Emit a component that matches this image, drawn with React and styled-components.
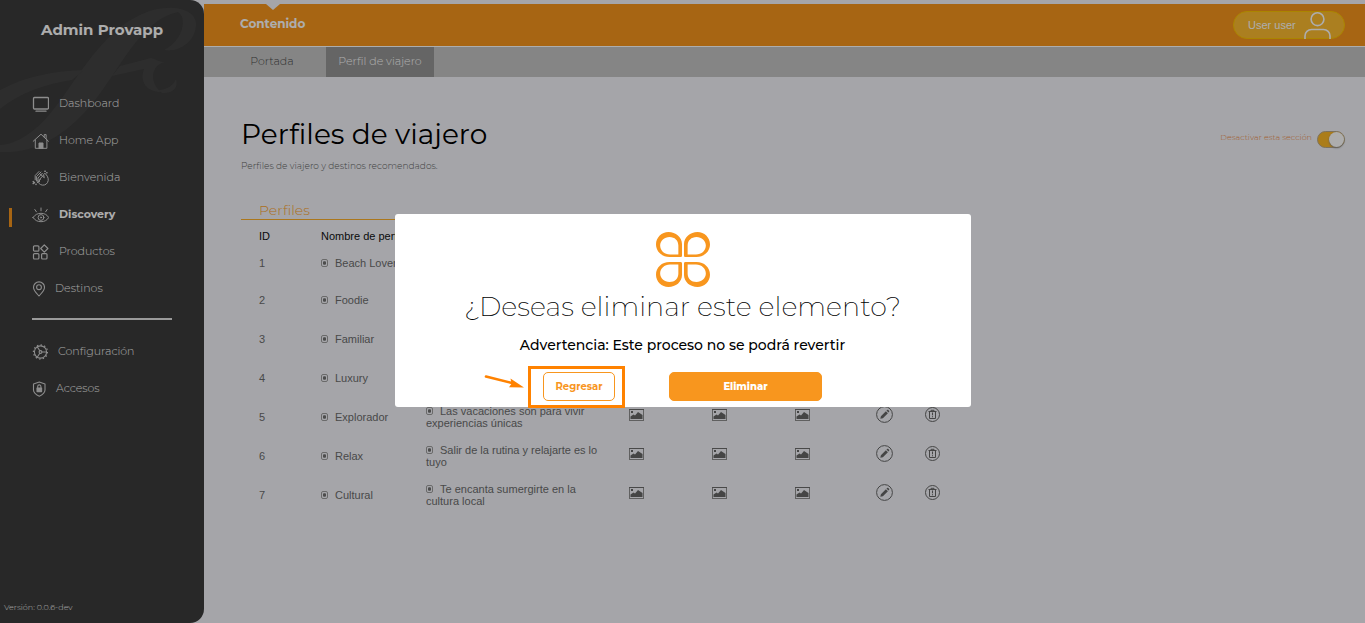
import React, { useState } from 'react';
import styled, { createGlobalStyle } from 'styled-components';

const GlobalStyle = createGlobalStyle`
  * {
    box-sizing: border-box;
  }

  body {
    margin: 0;
    background-color: #f3f4fa;
    font-family: Montserrat, Inter, sans-serif;
  }

  button, input {
    font-family: inherit;
  }
`

const Layout = styled.div`
  display: flex;
  min-height: 100vh;
`

/* sidebar */

const Sidebar = styled.aside`
  position: relative;
  display: flex;
  flex-direction: column;
  flex: 0 0 204px;
  background-color: #3b3b3b;
  border-radius: 0 14px 14px 0;
  overflow: hidden;
`

const Watermark = styled.svg`
  position: absolute;
  top: 0;
  left: 0;
  width: 204px;
  height: 160px;
  fill: #434343;
`

const Brand = styled.h1`
  position: relative;
  margin: 20px 0 44px;
  font-size: 15px;
  line-height: 20px;
  font-weight: 700;
  text-align: center;
  color: #ffffff;
`

const Menu = styled.nav`
  position: relative;
  display: flex;
  flex-direction: column;
`

const MenuLink = styled.a`
  position: relative;
  display: flex;
  align-items: center;
  gap: 10px;
  height: 37px;
  padding-left: 32px;
  font-size: 11px;
  font-weight: ${props => props.$active ? 700 : 300};
  color: ${props => props.$active ? '#ffffff' : '#f4f4f4'};
  text-decoration: none;

  svg {
    margin-top: 2px;
    color: #d0d0d0;
  }

  &::before {
    content: '';
    display: ${props => props.$active ? 'block' : 'none'};
    position: absolute;
    left: 9px;
    top: 13px;
    width: 3px;
    height: 19px;
    background-color: #f7961d;
  }
`

const Divider = styled.hr`
  width: 140px;
  height: 2px;
  margin: 12px 32px;
  border: 0;
  background-color: #e4e4e4;
`

const Version = styled.small`
  margin-top: auto;
  padding: 0 4px 11px;
  font-size: 8px;
  line-height: 10px;
  font-weight: 300;
  color: #f4f4f4;
`

/* header */

const Main = styled.main`
  flex: 1;
  min-width: 0;
  padding-top: 4px;
`

const TopBar = styled.header`
  display: flex;
  align-items: flex-start;
  justify-content: space-between;
  height: 43px;
  padding: 0 20px 0 36px;
  background-color: #f7961d;
  border-bottom: 1px solid #ffffff;
`

const TopLink = styled.a`
  position: relative;
  font-size: 12px;
  line-height: 40px;
  font-weight: 700;
  color: #ffffff;
  text-decoration: none;

  &::before {
    content: '';
    position: absolute;
    top: 0;
    left: 50%;
    margin-left: -7px;
    border: 7px solid transparent;
    border-top: 6px solid #f3f4fa;
    border-bottom: 0;
  }
`

const UserButton = styled.button`
  display: flex;
  align-items: center;
  justify-content: space-between;
  width: 112px;
  height: 28px;
  margin-top: 7px;
  padding: 0 13px 0 14px;
  border: 1px solid #fdc400;
  border-radius: 14px;
  background-color: #fdbb30;
  font-family: "Liberation Sans", sans-serif;
  font-size: 11px;
  color: #ffffff;
`

const Tabs = styled.nav`
  display: flex;
  height: 30px;
  padding-left: 14px;
  background-color: #c5c5c5;
`

const Tab = styled.a`
  width: 108px;
  font-size: 11px;
  line-height: 28px;
  font-weight: 300;
  text-align: center;
  text-decoration: none;
  color: ${props => props.$active ? '#ffffff' : '#4a4a4a'};
  background-color: ${props => props.$active ? '#969696' : 'transparent'};
`

/* content */

const Content = styled.div`
  padding: 38px 20px 0 37px;
`

const Heading = styled.div`
  display: flex;
  justify-content: space-between;
  align-items: flex-start;
`

const Title = styled.h2`
  margin: 0;
  font-size: 28px;
  line-height: 38px;
  font-weight: 400;
  color: #000000;
`

const Subtitle = styled.p`
  margin: 7px 0 0;
  font-size: 9px;
  line-height: 12px;
  font-weight: 300;
  color: #606060;
`

const SwitchLabel = styled.label`
  display: flex;
  align-items: flex-start;
  gap: 5px;
  margin-top: 16px;
  font-size: 8px;
  line-height: 12px;
  font-weight: 300;
  color: #ef8a45;
`

const Switch = styled.input`
  appearance: none;
  display: flex;
  justify-content: flex-start;
  width: 28px;
  height: 17px;
  margin: 0;
  border: 1px solid #b9a98a;
  border-radius: 9px;
  background-color: #d5d5d5;
  cursor: pointer;

  &:checked {
    justify-content: flex-end;
    background-color: #fdb827;
  }

  &::after {
    content: '';
    width: 15px;
    height: 15px;
    border-radius: 50%;
    background-color: #ffffff;
    box-shadow: 0 1px 2px #8a8a8a;
  }
`

const Section = styled.section`
  width: 66%;
  margin-top: 30px;
`

const SectionTitle = styled.h3`
  margin: 0 0 7px;
  padding: 0 0 1px 18px;
  border-bottom: 1px solid #fdb02a;
  font-size: 14px;
  line-height: 16px;
  font-weight: 300;
  color: #fda52e;
`

const Table = styled.table`
  width: 100%;
  table-layout: fixed;
  border-collapse: collapse;
  font-family: "Liberation Sans", sans-serif;
  font-size: 11px;
  line-height: 12px;
  color: #6c6c6c;
`

const HeadCell = styled.th`
  height: 18px;
  padding: 0;
  font-weight: 400;
  text-align: left;
  white-space: nowrap;
  color: #101010;

  &:first-child {
    padding-left: 18px;
  }
`

const Row = styled.tr`
  height: 39px;

  &:first-child {
    height: 35px;
  }
`

const Cell = styled.td`
  padding: 0 20px 0 0;

  &:first-child {
    padding-left: 18px;
  }
`

const NameCell = styled(Cell)`
  padding: 0;
  white-space: nowrap;
`

const IconCell = styled.td`
  padding: 0 0 4px;

  svg {
    display: block;
  }
`

const IconButton = styled.button`
  display: block;
  padding: 0;
  border: 0;
  background: none;
  color: inherit;
  cursor: pointer;
`

const InlineIcon = styled.svg`
  margin-right: 7px;
`

/* modal */

const Backdrop = styled.div`
  position: fixed;
  inset: 0;
  display: flex;
  align-items: center;
  justify-content: center;
  padding-bottom: 2px;
  background-color: rgba(0, 0, 0, 0.32);
`

const Modal = styled.div`
  display: flex;
  flex-direction: column;
  align-items: center;
  width: 576px;
  max-width: 100%;
  padding: 18px 20px 6px;
  border-radius: 3px;
  background-color: #ffffff;
`

const ModalTitle = styled.h2`
  margin: 0;
  font-size: 27px;
  line-height: 40px;
  font-weight: 200;
  color: #000000;
`

const Warning = styled.p`
  margin: 8px 0 17px;
  font-size: 14px;
  line-height: 20px;
  font-weight: 500;
  color: #000000;
`

const Actions = styled.div`
  display: flex;
  gap: 54px;
`

const Highlight = styled.div`
  position: relative;

  &::after {
    content: '';
    position: absolute;
    inset: -6px -10px -7px -15px;
    border: 3px solid #ff8200;
    pointer-events: none;
  }
`

const Arrow = styled.svg`
  position: absolute;
  top: 0;
  left: -59px;
`

const ModalButton = styled.button`
  width: ${props => props.$primary ? '153px' : '72px'};
  height: 29px;
  padding: 0;
  border: 1px solid #f8961e;
  border-radius: 5px;
  background-color: ${props => props.$primary ? '#f8961e' : '#ffffff'};
  color: ${props => props.$primary ? '#ffffff' : '#f8961e'};
  font-size: 10px;
  font-weight: ${props => props.$primary ? 800 : 700};
  cursor: pointer;
`

const line = { fill: 'none', stroke: 'currentColor', strokeLinecap: 'round', strokeLinejoin: 'round' };

const DashboardIcon = () => (
  <svg width="17" height="16" viewBox="0 0 17 16" {...line} strokeWidth="1.3">
    <rect x="1.5" y="1.5" width="15" height="11.5" rx="1" />
    <path d="M4 15.2h10" />
  </svg>
)

const HomeIcon = () => (
  <svg width="17" height="16" viewBox="0 0 17 16" {...line} strokeWidth="1">
    <path d="M1.2 8.3L9 1.2l7.4 7.1M12.2 4V1.6h1.9v4M3.3 7v8.3h11.6V7" />
    <path d="M7 15.3V10h4v5.3z" fill="currentColor" />
  </svg>
)

const ClapIcon = () => (
  <svg width="17" height="16" viewBox="0 0 17 16" {...line} strokeWidth="1">
    <path d="M13.2 3.6c2 1.800 3.400 4.400 3 7-.5 3-3 4.900-5.900 4.500-2.400-.3-4.200-2-4.600-4.300M13.200 3.600c-.9-.4-1.700.3-1.500 1.300l.6 2.900L8 4" />
    <path d="M3.200 9.800V5.500L7 1.500M4.600 11V6.500L9 2M6 11.200V8l4.300-4.700M7.400 11.800V9.500l3.800-4M5.300 12.800l3.200-3.600" />
    <path d="M12.800 1.300h.5M14.700 2.800h.3M1.200 11.500l1.300 1.200-1.300.8M4 14.300v.3" strokeWidth="1.500" />
  </svg>
)

const EyeIcon = () => (
  <svg width="17" height="16" viewBox="0 0 17 16" {...line} strokeWidth="1">
    <path d="M1 10.500C3 7.700 5.500 6.300 9 6.300s6 1.400 7.700 4.200C15 13.300 12.500 14.700 9 14.700S3 13.300 1 10.500z" />
    <circle cx="9" cy="10.500" r="2.900" />
    <circle cx="9" cy="10.500" r=".6" />
    <path d="M9 1v2.800M2.800 2.500l1.600 2.300M15.200 2.500l-1.600 2.300" />
  </svg>
)

const ProductsIcon = () => (
  <svg width="17" height="16" viewBox="0 0 17 16" {...line} strokeWidth="1.200">
    <rect x="1.500" y="1.800" width="5.400" height="5.400" rx="1" />
    <rect x="1.500" y="9.600" width="5.400" height="5.400" rx="1" />
    <rect x="9.600" y="9.600" width="5.400" height="5.400" rx="1" />
    <path d="M12.300.9l3.600 3.600-3.600 3.600-3.600-3.600z" />
  </svg>
)

const PinIcon = () => (
  <svg width="13" height="16" viewBox="0 0 13 16" {...line} strokeWidth="1.100">
    <path d="M7 15C4.500 12.200 1.500 9.500 1.500 6.400a5.500 5.500 0 0 1 11 0C12.500 9.500 9.500 12.200 7 15z" />
    <circle cx="7" cy="6.200" r="2.400" />
  </svg>
)

const GearIcon = () => (
  <svg width="16" height="16" viewBox="0 0 16 16" {...line} strokeWidth="1.100">
    <circle cx="8.500" cy="8" r="6.100" />
    <circle cx="8.500" cy="8" r="7.100" strokeDasharray="1.400 2.300" strokeLinecap="butt" strokeWidth="1.200" />
    <path d="M10 8h4.400M7.800 9.200l-2.600 4M7.800 6.800l-2.600-4" />
    <circle cx="8.500" cy="8" r="1.400" />
  </svg>
)

const ShieldIcon = () => (
  <svg width="14" height="16" viewBox="0 0 14 16" {...line} strokeWidth="1.100">
    <path d="M7.300 1L13 3v6c0 3-2.500 4.700-5.700 6.200C4.100 13.700 1.500 12 1.500 9V3z" />
    <path d="M5.700 7V5.500a1.600 1.600 0 0 1 3.200 0V7" />
    <rect x="5" y="7" width="4.600" height="3.600" fill="currentColor" />
  </svg>
)

const UserIcon = () => (
  <svg width="27" height="27" viewBox="0 0 27 27" fill="none" stroke="#ffffff" strokeWidth="1.600">
    <circle cx="13.500" cy="7.200" r="6.400" />
    <path d="M1 27v-3a6.500 6.500 0 0 1 6.500-6.500h12A6.500 6.500 0 0 1 26 24v3" />
  </svg>
)

const TextIcon = () => (
  <InlineIcon width="7" height="8" viewBox="0 0 7 8">
    <rect x=".5" y=".5" width="6" height="7" rx="1.500" fill="none" stroke="#9c9c9c" />
    <rect x="2" y="2.300" width="3" height="3.400" rx="1" fill="#707070" />
  </InlineIcon>
)

const ImageIcon = () => (
  <svg width="15" height="12" viewBox="0 0 15 12">
    <rect x=".5" y=".5" width="14" height="11" fill="none" stroke="#8e8e8e" />
    <path d="M0 .5h15" stroke="#6c6c6c" />
    <path d="M1.500 10V7.500l3-2 1.500 1 3-3.500 1.500 1L13.500 6v4z" fill="#666666" />
    <rect x="2" y="2" width="2" height="2" fill="#666666" />
  </svg>
)

const EditIcon = () => (
  <svg width="17" height="17" viewBox="0 0 17 17">
    <circle cx="8.500" cy="8.500" r="7.900" fill="none" stroke="#666666" />
    <path d="M4.300 12.700l.6-2.500 5-5 2 2-5 5zM10.500 4.600l.8-.8c.7-.4 2.300 1 1.900 1.900l-.8.800z" fill="#666666" />
  </svg>
)

const TrashIcon = () => (
  <svg width="15" height="15" viewBox="0 0 15 15" fill="none" stroke="#666666">
    <circle cx="7.500" cy="7.500" r="7" />
    <path d="M3.500 4.500h8M6 4.300V3.300h3v1M4.500 5v6.500h6V5M7.500 5.500v2.800M7.500 9.200v1.100" />
  </svg>
)

const petal = 'M12 0C19 0 25 5 25 12v11.500c0 1-.5 1.500-1.500 1.500H13C5.500 25 0 19.500 0 12.300 0 5.500 5.500 0 12 0zM13 5C8 5 4 8.800 4 13.500c0 5 4 9 9.500 9H21c.5 0 .5 0 .5-.5V13.500C21.500 8.500 18 5 13 5z';

const Logo = () => (
  <svg width="54" height="55" viewBox="0 0 54 55" fill="#f8961e" fillRule="evenodd" aria-hidden="true">
    <path d={petal} transform="scale(1.040 1)" />
    <path d={petal} transform="translate(54 0) scale(-1.040 1)" />
    <path d={petal} transform="translate(0 55) scale(1.040 -1)" />
    <path d={petal} transform="translate(54 55) scale(-1.040 -1)" />
  </svg>
)

const mainMenu = [
  { label: 'Dashboard', icon: DashboardIcon },
  { label: 'Home App', icon: HomeIcon },
  { label: 'Bienvenida', icon: ClapIcon },
  { label: 'Discovery', icon: EyeIcon, active: true },
  { label: 'Productos', icon: ProductsIcon },
  { label: 'Destinos', icon: PinIcon },
];

const settingsMenu = [
  { label: 'Configuración', icon: GearIcon },
  { label: 'Accesos', icon: ShieldIcon },
];

const profiles = [
  { id: 1, name: 'Beach Lover' },
  { id: 2, name: 'Foodie' },
  { id: 3, name: 'Familiar' },
  { id: 4, name: 'Luxury' },
  { id: 5, name: 'Explorador', text: 'Las vacaciones son para vivir experiencias únicas' },
  { id: 6, name: 'Relax', text: 'Salir de la rutina y relajarte es lo tuyo' },
  { id: 7, name: 'Cultural', text: 'Te encanta sumergirte en la cultura local' },
];

const renderLinks = items => items.map(({ label, icon: Icon, active }) => (
  <MenuLink key={label} href="#" $active={active}>
    <Icon />
    {label}
  </MenuLink>
));

const ProfileRow = ({ profile, onDelete }) => (
  <Row>
    <Cell>{profile.id}</Cell>
    <NameCell><TextIcon />{profile.name}</NameCell>
    <Cell>{profile.text && <><TextIcon />{profile.text}</>}</Cell>
    <IconCell><ImageIcon /></IconCell>
    <IconCell><ImageIcon /></IconCell>
    <IconCell><ImageIcon /></IconCell>
    <IconCell><IconButton type="button"><EditIcon /></IconButton></IconCell>
    <IconCell><IconButton type="button" onClick={onDelete}><TrashIcon /></IconButton></IconCell>
  </Row>
)

const DeleteModal = ({ onClose }) => (
  <Backdrop>
    <Modal role="dialog" aria-modal="true" aria-labelledby="modal-title">
      <Logo />
      <ModalTitle id="modal-title">¿Deseas eliminar este elemento?</ModalTitle>
      <Warning>Advertencia: Este proceso no se podrá revertir</Warning>
      <Actions>
        <Highlight>
          <Arrow width="40" height="20" viewBox="0 0 40 20">
            <path d="M2 4.500l26 6.500" stroke="#ff8200" strokeWidth="2.600" strokeLinecap="round" />
            <path d="M26.500 6.500L40 15.500 25 15.200l2.500-3.500z" fill="#ff8200" />
          </Arrow>
          <ModalButton type="button" onClick={onClose}>Regresar</ModalButton>
        </Highlight>
        <ModalButton type="button" $primary onClick={onClose}>Eliminar</ModalButton>
      </Actions>
    </Modal>
  </Backdrop>
)

const App = () => {
  const [modalOpen, setModalOpen] = useState(true);
  const [enabled, setEnabled] = useState(true);

  return (
    <Layout>
      <GlobalStyle />

      <Sidebar>
        <Watermark viewBox="0 0 204 160" aria-hidden="true">
          <path d="M0 152C32 154 64 138 92 104c28-34 48-84 86-92 9 5 6 28-14 38 16 3 33-10 32-27C195 7 165 3 142 14 106 30 86 65 62 98 45 122 25 143 0 145z" />
          <path d="M0 90C26 76 54 71 84 70L72 80C45 84 20 93 0 109zM120 66l31-8c5 1 8 4 14 4-14 3-16 20-4 30-14 0-22-10-17-23l-32 7z" />
          <path d="M158 90c8 0 15-4 18-11 3 9-4 15-14 14z" />
        </Watermark>
        <Brand>Admin Provapp</Brand>
        <Menu>
          {renderLinks(mainMenu)}
          <Divider />
          {renderLinks(settingsMenu)}
        </Menu>
        <Version>Versión: 0.0.6-dev</Version>
      </Sidebar>

      <Main>
        <TopBar>
          <TopLink href="#">Contenido</TopLink>
          <UserButton type="button">
            User user
            <UserIcon />
          </UserButton>
        </TopBar>
        <Tabs>
          <Tab href="#">Portada</Tab>
          <Tab href="#" $active>Perfil de viajero</Tab>
        </Tabs>

        <Content>
          <Heading>
            <div>
              <Title>Perfiles de viajero</Title>
              <Subtitle>Perfiles de viajero y destinos recomendados.</Subtitle>
            </div>
            <SwitchLabel>
              Desactivar esta sección
              <Switch type="checkbox" checked={enabled} onChange={e => setEnabled(e.target.checked)} />
            </SwitchLabel>
          </Heading>

          <Section>
            <SectionTitle>Perfiles</SectionTitle>
            <Table>
              <colgroup>
                <col width="80" />
                <col width="105" />
                <col width="203" />
                <col width="83" />
                <col width="83" />
                <col width="81" />
                <col width="49" />
                <col />
              </colgroup>
              <thead>
                <tr>
                  <HeadCell>ID</HeadCell>
                  <HeadCell>Nombre de perfil</HeadCell>
                </tr>
              </thead>
              <tbody>
                {profiles.map(profile => (
                  <ProfileRow key={profile.id} profile={profile} onDelete={() => setModalOpen(true)} />
                ))}
              </tbody>
            </Table>
          </Section>
        </Content>
      </Main>

      {modalOpen && <DeleteModal onClose={() => setModalOpen(false)} />}
    </Layout>
  );
}

export default App;
